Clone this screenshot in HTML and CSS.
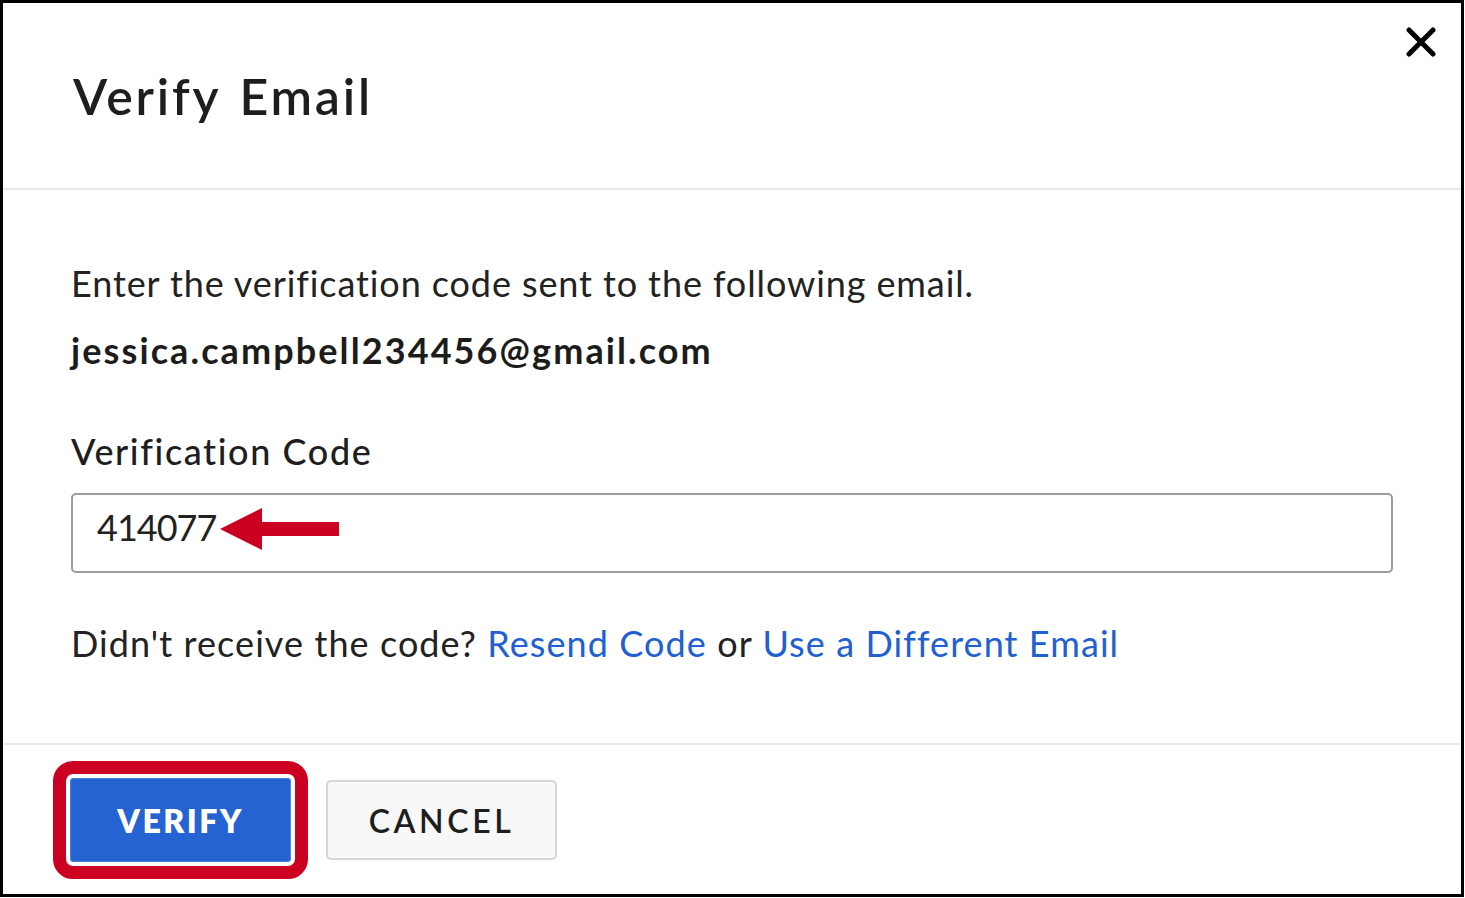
FILE: index.html
```html
<!DOCTYPE html>
<html lang="en">
<head>
<meta charset="utf-8">
<title>Verify Email</title>
<link rel="stylesheet" href="styles.css">
</head>
<body>
<div class="modal">
  <div class="header">
    <h1 class="title">Verify Email</h1>
    <button class="close" aria-label="Close">
      <svg width="30" height="30" viewBox="0 0 30 30"><path d="M3 3 L27 27 M27 3 L3 27" stroke="#000" stroke-width="5" stroke-linecap="round" fill="none"/></svg>
    </button>
  </div>
  <div class="content">
    <p class="intro">Enter the verification code sent to the following email.</p>
    <p class="email">jessica.campbell234456@gmail.com</p>
    <div class="label">Verification Code</div>
    <div class="field">
      <div class="input">414077</div>
      <svg class="arrow" width="122" height="44" viewBox="0 0 122 44"><polygon points="0,21 42,0 42,14 119,14 119,28 42,28 42,42" fill="#cc0020"/></svg>
    </div>
    <p class="resend">Didn't receive the code? <a class="link">Resend Code</a> or <a class="link">Use a Different Email</a></p>
  </div>
  <div class="footer">
    <div class="highlight">
      <button class="btn-verify">VERIFY</button>
    </div>
    <button class="btn-cancel">CANCEL</button>
  </div>
</div>
</body>
</html>
```

FILE: styles.css
```css
html, body {
  margin: 0;
  padding: 0;
  background: #fff;
}
body {
  font-family: Lato, "Noto Sans", sans-serif;
  color: #222;
}
.modal {
  width: 1464px;
  height: 897px;
  border: 3px solid #000;
  box-sizing: border-box;
  display: flex;
  flex-direction: column;
  background: #fff;
}
.header {
  height: 187px;
  box-sizing: border-box;
  border-bottom: 2px solid #e8e8e8;
  display: flex;
  justify-content: space-between;
  align-items: flex-start;
}
.title {
  margin: 0;
  padding: 63px 0 0 70px;
  font-size: 50px;
  line-height: 60px;
  font-weight: 600;
  color: #1e1e1e;
  letter-spacing: 2.8px;
  word-spacing: 4px;
}
.close {
  margin: 24px 25px 0 0;
  padding: 0;
  border: 0;
  background: none;
  width: 30px;
  height: 30px;
  display: block;
}
.close svg { display: block; }
.content {
  flex: 1;
  padding: 0 70px 0 68px;
  border-bottom: 2px solid #e8e8e8;
}
.intro, .email, .label, .resend {
  margin: 0;
  font-size: 36px;
  line-height: 44px;
}
.intro {
  margin-top: 71px;
  color: #222;
  letter-spacing: 0.9px;
}
.email {
  margin-top: 23px;
  font-weight: 700;
  color: #1c1c1c;
  letter-spacing: 2.1px;
}
.label {
  margin-top: 57px;
  font-weight: 500;
  color: #1e1e1e;
  letter-spacing: 1.6px;
}
.field {
  position: relative;
  margin-top: 20px;
  width: 1322px;
}
.input {
  height: 80px;
  box-sizing: border-box;
  border: 2px solid #9c9c9c;
  border-radius: 5px;
  padding: 10px 0 0 24px;
  font-size: 36px;
  line-height: 44px;
  color: #222;
  letter-spacing: -1px;
}
.arrow {
  position: absolute;
  left: 149px;
  top: 15px;
}
.resend {
  margin-top: 48px;
  color: #222;
  letter-spacing: 1.08px;
}
.link {
  color: #2160d3;
  text-decoration: none;
}
.footer {
  flex: 0 0 149px;
  display: flex;
  align-items: flex-start;
  padding: 16px 0 0 50px;
  box-sizing: border-box;
  gap: 18px;
}
.highlight {
  border: 13px solid #cc0020;
  border-radius: 20px;
  padding: 4px;
  background: #fff;
}
.btn-verify {
  display: block;
  width: 221px;
  height: 84px;
  border: 0;
  border-radius: 4px;
  background: #2463d1;
  box-shadow: inset 0 0 0 1px #4c84e0;
  color: #fff;
  font-family: Lato, "Noto Sans", sans-serif;
  font-size: 32px;
  font-weight: 800;
  letter-spacing: 2.5px;
  padding: 0;
}
.btn-cancel {
  margin-top: 19px;
  width: 231px;
  height: 80px;
  box-sizing: border-box;
  border: 2px solid #d6d6d6;
  border-radius: 5px;
  background: #f8f8f8;
  color: #1e1e1e;
  font-family: Lato, "Noto Sans", sans-serif;
  font-size: 32px;
  font-weight: 600;
  letter-spacing: 3.6px;
  padding: 0;
}
```
